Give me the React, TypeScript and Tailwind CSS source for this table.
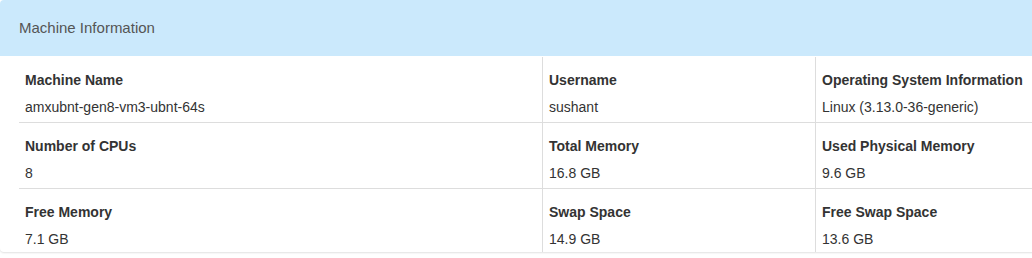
import React from 'react';

const rows = [
  [
    { label: 'Machine Name', value: 'amxubnt-gen8-vm3-ubnt-64s' },
    { label: 'Username', value: 'sushant' },
    { label: 'Operating System Information', value: 'Linux (3.13.0-36-generic)' },
  ],
  [
    { label: 'Number of CPUs', value: '8' },
    { label: 'Total Memory', value: '16.8 GB' },
    { label: 'Used Physical Memory', value: '9.6 GB' },
  ],
  [
    { label: 'Free Memory', value: '7.1 GB' },
    { label: 'Swap Space', value: '14.9 GB' },
    { label: 'Free Swap Space', value: '13.6 GB' },
  ],
];

const App = () => {
  return (
    <div className="w-[1032px] h-[258px] overflow-hidden bg-white font-['Liberation_Sans',Arial,sans-serif] text-[14px] text-[#333]">
      <div className="w-[1060px] rounded-b-[4px] bg-white shadow-[0_1px_2px_rgba(0,0,0,0.12)]">
        {/* Panel heading */}
        <div className="h-[56px] bg-[#cbe9fc] pl-[19px] flex items-center rounded-t-[4px]">
          <span className="text-[15px] text-[#555]">Machine Information</span>
        </div>

        {/* Panel body */}
        <div className="pl-[19px] pt-px">
          {rows.map((row, ri) => {
            const last = ri === rows.length - 1;
            return (
              <div
                key={ri}
                className={`grid grid-cols-[523px_273px_1fr] ${last ? '' : 'border-b border-[#ddd]'}`}
              >
                {row.map((cell, ci) => (
                  <div
                    key={cell.label}
                    className={`px-[6px] pt-[13px] ${last ? 'pb-[3px]' : 'pb-[5px]'} ${ci > 0 ? 'border-l border-[#ddd]' : ''}`}
                  >
                    <div className="font-bold leading-[20px]">{cell.label}</div>
                    <div className="mt-[7px] leading-[20px]">{cell.value}</div>
                  </div>
                ))}
              </div>
            );
          })}
        </div>
      </div>
    </div>
  );
};

export default App;
